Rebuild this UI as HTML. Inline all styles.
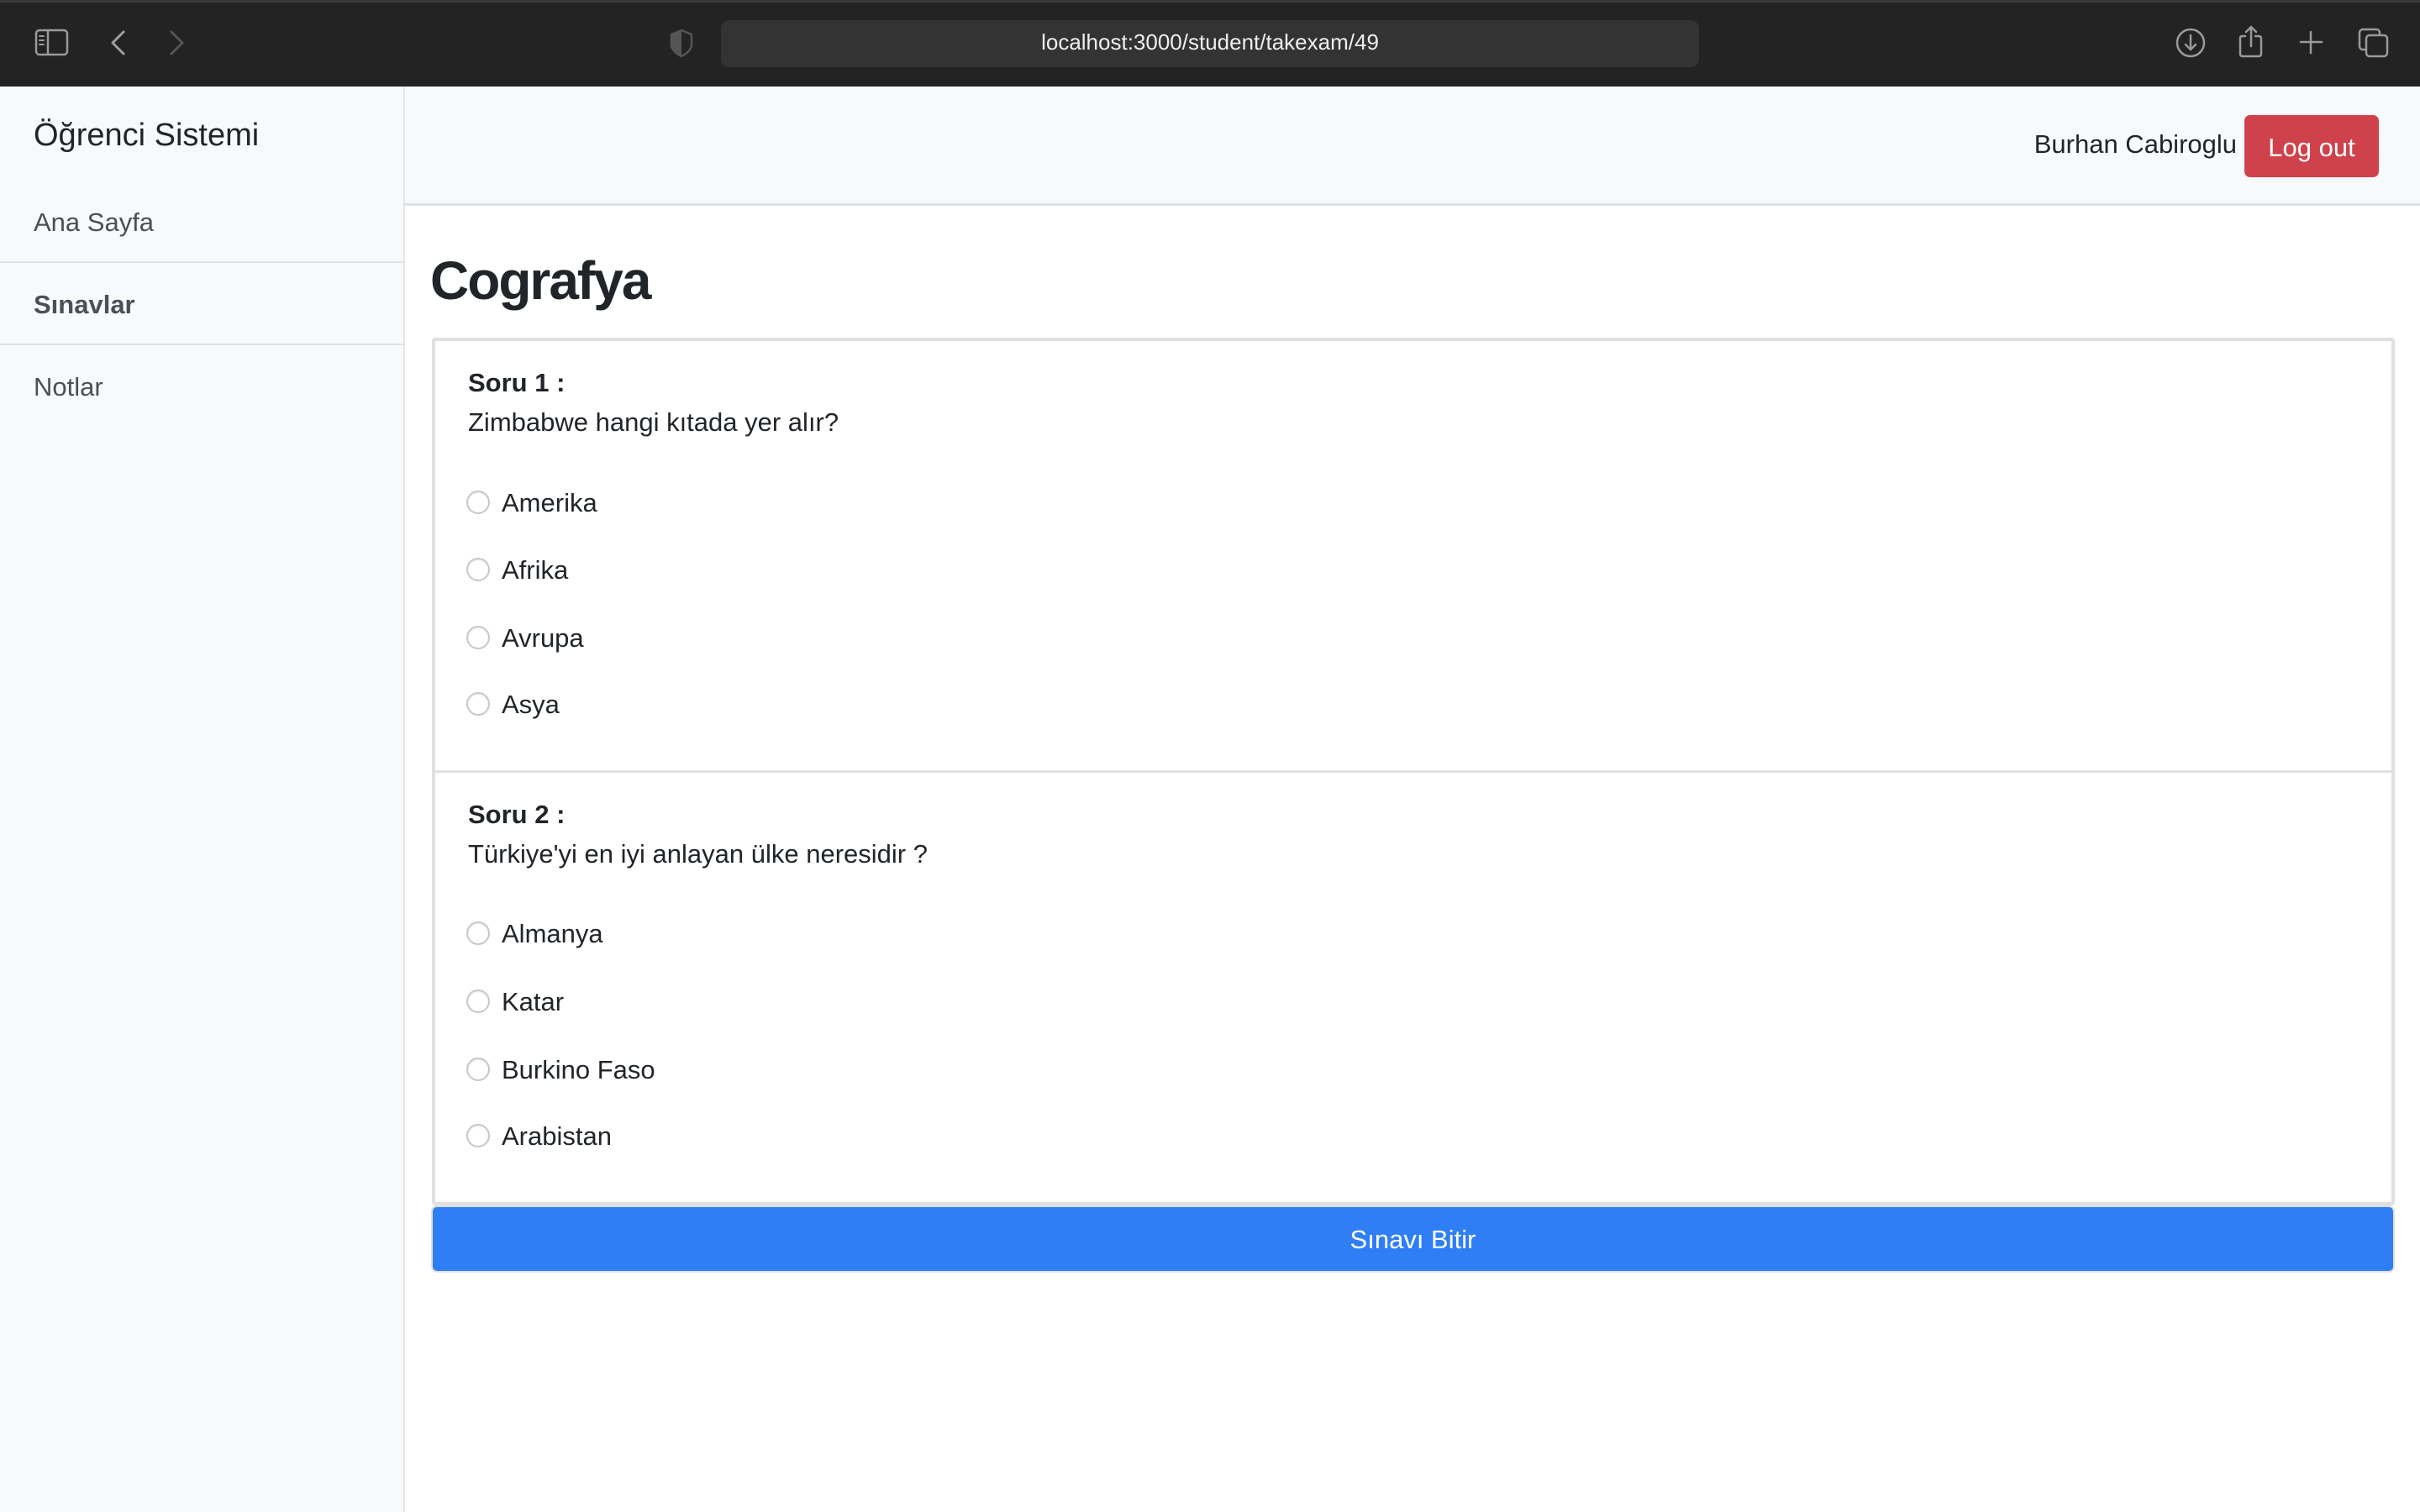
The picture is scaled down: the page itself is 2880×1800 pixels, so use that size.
<!DOCTYPE html>
<html><head><meta charset="utf-8">
<style>
*{margin:0;padding:0;box-sizing:border-box}
html,body{width:2880px;height:1800px;overflow:hidden;background:#fff;font-family:"Liberation Sans",Arial,sans-serif;color:#212529}
.a{position:absolute}
.t{position:absolute;white-space:nowrap;line-height:1}
.radio{position:absolute;width:28px;height:28px;border-radius:50%;border:2px solid #c8c8c8;background:#fff;box-shadow:inset 0 1px 2px rgba(0,0,0,.08)}
.opt{font-size:31px;color:#212529}
</style></head><body>
<div class="a" style="left:0;top:0;width:2880px;height:103px;background:#232323;border-top:3px solid #3a3a3a"></div>
<svg class="a" style="left:0;top:0" width="2880" height="103" fill="none" stroke-linecap="round" stroke-linejoin="round">
 <rect x="43" y="36" width="37" height="29" rx="4" stroke="#9a9a9a" stroke-width="2.5"/>
 <line x1="57" y1="36" x2="57" y2="65" stroke="#9a9a9a" stroke-width="2.5"/>
 <line x1="47" y1="43" x2="52" y2="43" stroke="#9a9a9a" stroke-width="2"/>
 <line x1="47" y1="48" x2="52" y2="48" stroke="#9a9a9a" stroke-width="2"/>
 <line x1="47" y1="53" x2="52" y2="53" stroke="#9a9a9a" stroke-width="2"/>
 <path d="M147 38 L134 51 L147 64" stroke="#a0a0a0" stroke-width="3"/>
 <path d="M204 38 L217 51 L204 64" stroke="#555" stroke-width="3"/>
 <path d="M811 36 L799 41 V55 Q801 62 811 67 Q821 62 823 55 V41 Z" stroke="#555" stroke-width="2.5"/>
 <path d="M811 36 V67 Q801 62 799 55 V41 Z" fill="#555"/>
 <path d="M2003 44 A9 9 0 1 1 1994 40" stroke="#ddd" stroke-width="2.5"/>
 <path d="M1993 36 L1997 40 L1993 44" stroke="#ddd" stroke-width="2.5"/>
 <circle cx="2607" cy="51" r="16" stroke="#9a9a9a" stroke-width="2.5"/>
 <path d="M2607 42 V59 M2601 53 L2607 59 L2613 53" stroke="#9a9a9a" stroke-width="2.5"/>
 <path d="M2672 43 H2668 Q2666 43 2666 46 V64 Q2666 67 2669 67 H2688 Q2691 67 2691 64 V46 Q2691 43 2688 43 H2684" stroke="#9a9a9a" stroke-width="2.5"/>
 <path d="M2679 33 V55 M2673 38 L2679 32 L2685 38" stroke="#9a9a9a" stroke-width="2.5"/>
 <path d="M2750 38 V63 M2738 50 H2763" stroke="#9a9a9a" stroke-width="2.5"/>
 <rect x="2808" y="35" width="24" height="24" rx="4" stroke="#9a9a9a" stroke-width="2.5"/>
 <rect x="2816" y="42" width="25" height="25" rx="4" fill="#232323" stroke="#9a9a9a" stroke-width="2.5"/>
</svg>
<div class="a" style="left:858px;top:24px;width:1164px;height:56px;border-radius:10px;background:#333"></div>
<div class="t" style="left:858px;width:1164px;top:37px;text-align:center;font-size:26px;color:#eee">localhost:3000/student/takexam/49</div>
<div class="a" style="left:0;top:103px;width:482px;height:1697px;background:#f8f9fa;border-right:2px solid #e3e5e8"></div>
<div class="t" style="left:40px;top:142px;font-size:38px;color:#212529">Öğrenci Sistemi</div>
<div class="t" style="left:40px;top:249px;font-size:31px;color:#495057">Ana Sayfa</div>
<div class="a" style="left:0;top:311px;width:480px;height:2px;background:#dee2e6"></div>
<div class="t" style="left:40px;top:347px;font-size:31px;color:#495057;font-weight:900">Sınavlar</div>
<div class="a" style="left:0;top:409px;width:480px;height:2px;background:#dee2e6"></div>
<div class="t" style="left:40px;top:445px;font-size:31px;color:#495057">Notlar</div>
<div class="a" style="left:482px;top:103px;width:2398px;height:142px;background:#f8f9fa;border-bottom:3px solid #dee2e6"></div>
<div class="t" style="right:218px;top:156px;font-size:31px;color:#212529">Burhan Cabiroglu</div>
<div class="a" style="left:2671px;top:137px;width:160px;height:74px;border-radius:7px;background:#cf424b"></div>
<div class="t" style="left:2671px;width:160px;top:160px;text-align:center;font-size:31px;color:#fff">Log out</div>
<div class="t" style="left:512px;top:302px;font-size:64px;font-weight:bold;letter-spacing:-2px;color:#212529">Cografya</div>
<div class="a" style="left:514px;top:402px;width:2336px;height:1033px;border:4px solid #e0e0e0;border-radius:4px"></div>
<div class="a" style="left:518px;top:917px;width:2328px;height:3px;background:#e0e0e0"></div>
<div class="t" style="left:557px;top:440px;font-size:31px;font-weight:bold">Soru 1 :</div>
<div class="t" style="left:557px;top:487px;font-size:31px">Zimbabwe hangi kıtada yer alır?</div>
<div class="radio" style="left:555px;top:584px"></div><div class="t opt" style="left:597px;top:583px">Amerika</div>
<div class="radio" style="left:555px;top:664px"></div><div class="t opt" style="left:597px;top:663px">Afrika</div>
<div class="radio" style="left:555px;top:745px"></div><div class="t opt" style="left:597px;top:744px">Avrupa</div>
<div class="radio" style="left:555px;top:824px"></div><div class="t opt" style="left:597px;top:823px">Asya</div>
<div class="t" style="left:557px;top:954px;font-size:31px;font-weight:bold">Soru 2 :</div>
<div class="t" style="left:557px;top:1001px;font-size:31px">Türkiye'yi en iyi anlayan ülke neresidir ?</div>
<div class="radio" style="left:555px;top:1097px"></div><div class="t opt" style="left:597px;top:1096px">Almanya</div>
<div class="radio" style="left:555px;top:1178px"></div><div class="t opt" style="left:597px;top:1177px">Katar</div>
<div class="radio" style="left:555px;top:1259px"></div><div class="t opt" style="left:597px;top:1258px">Burkino Faso</div>
<div class="radio" style="left:555px;top:1338px"></div><div class="t opt" style="left:597px;top:1337px">Arabistan</div>
<div class="a" style="left:513px;top:1435px;width:2337px;height:80px;border-radius:7px;background:#2f7ef5;border:2px solid #e0e0e0"></div>
<div class="t" style="left:513px;width:2337px;top:1460px;text-align:center;font-size:31px;color:#fff">Sınavı Bitir</div>
</body></html>
